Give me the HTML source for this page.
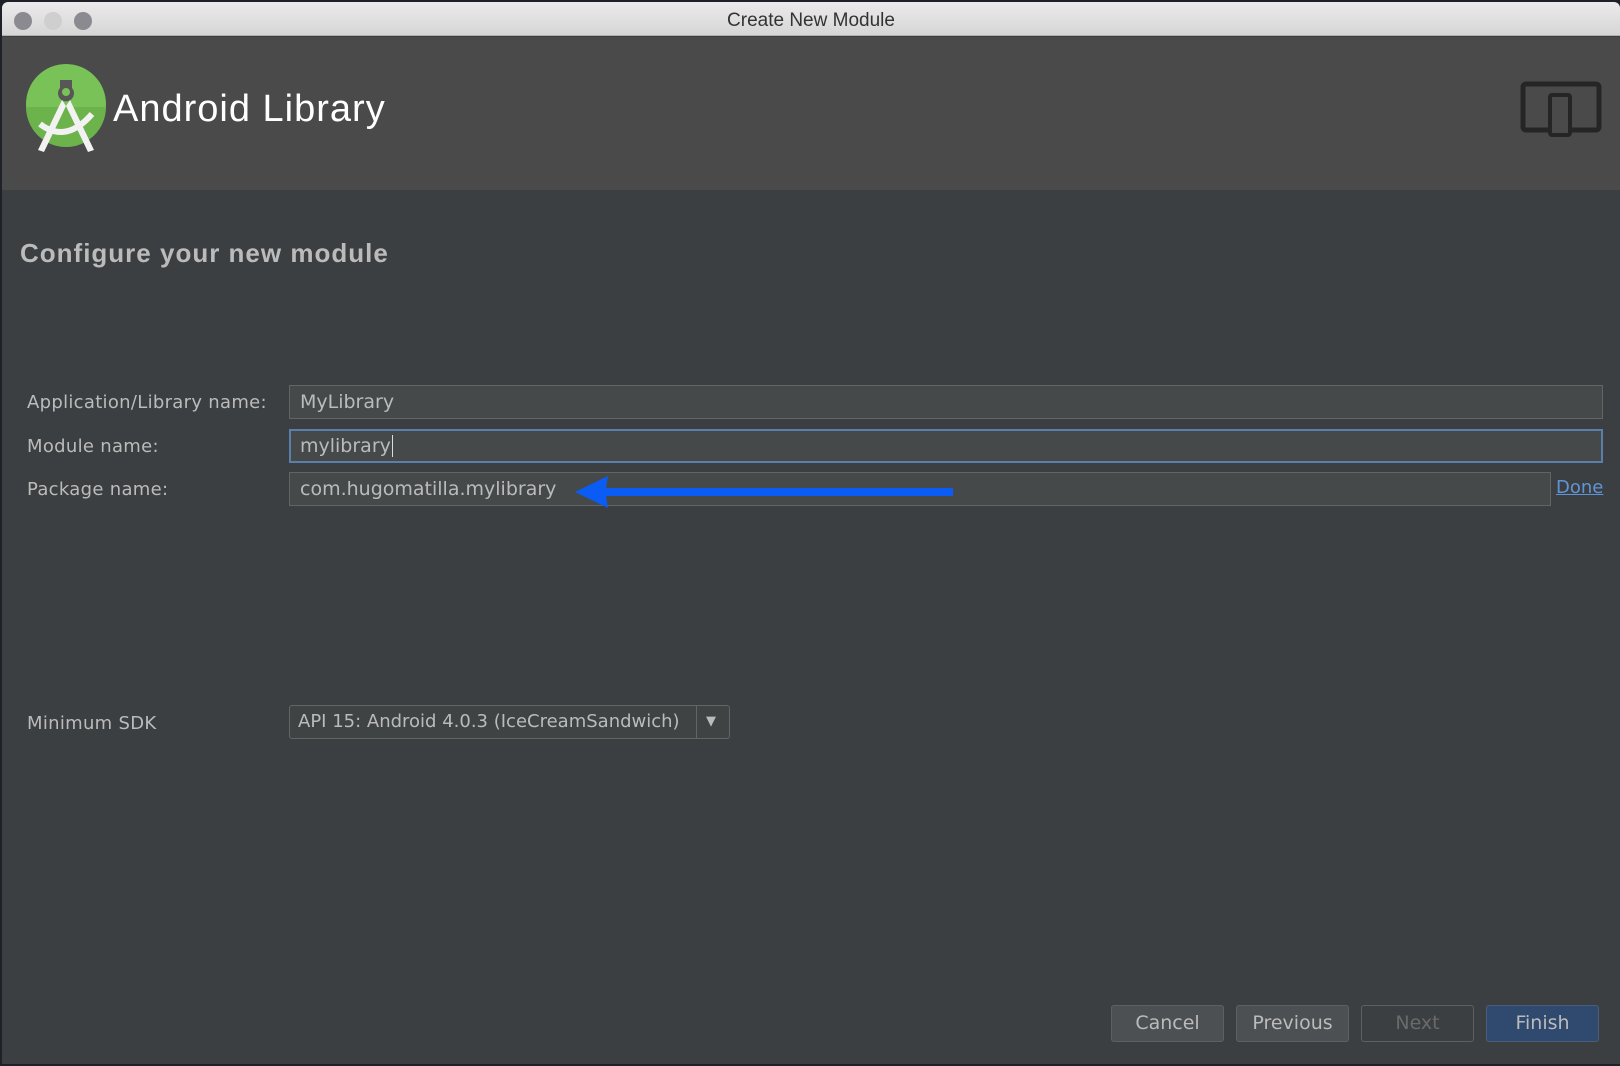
<!DOCTYPE html>
<html><head><meta charset="utf-8"><style>
*{box-sizing:border-box;margin:0;padding:0}
body{width:1620px;height:1066px;background:#1e2128;font-family:"DejaVu Sans","Liberation Sans",sans-serif;position:relative;overflow:hidden}
.win{position:absolute;left:2px;top:2px;width:1618px;height:1062px;background:#3c3f41;border-radius:6px 6px 0 0;overflow:hidden}
.tb{position:absolute;left:0;top:0;width:100%;height:34px;background:linear-gradient(#ebebeb,#d6d6d6);border-bottom:1px solid #b0b0b0;text-align:center;font-family:"Liberation Sans",sans-serif;font-size:19px;line-height:38px;color:#333}
.dot{position:absolute;top:10px;width:18px;height:18px;border-radius:50%;background:#8a8a90}
.hdr{position:absolute;left:0;top:35px;width:100%;height:153px;background:#4a4a4a}
.abs{position:absolute}
.lbl{position:absolute;left:25px;font-size:18px;color:#bbb;letter-spacing:.3px}
.fld{position:absolute;left:287px;height:34px;background:#45494a;border:1px solid #646464;color:#bbb;font-size:19px;line-height:32px;padding-left:10px}
.btn{position:absolute;top:1003px;width:113px;height:37px;border:1px solid #5e6060;border-radius:3px;background:#4c5052;color:#bbb;font-size:19px;text-align:center;line-height:35px}
</style></head><body>
<div class="win">
<div class="tb">Create New Module
<div class="dot" style="left:12px"></div><div class="dot" style="left:42px;background:#cfcfcf"></div><div class="dot" style="left:72px"></div></div>
<div class="hdr">
<svg class="abs" style="left:22px;top:25px" width="84" height="94" viewBox="0 0 84 94">
<circle cx="42" cy="42" r="40" fill="#78c257"/>
<path d="M2 45 A40 40 0 0 0 82 45Z" fill="#6db34c"/>
<path d="M36 18 h12 v8 a8 8 0 1 1 -12 0z" fill="#575757"/>
<path d="M38 38 L14 88 L20 90 L42 44Z M46 38 L70 88 L64 90 L42 44Z" fill="#f2f2f2"/>
<path d="M16 62 Q42 82 68 52" stroke="#f2f2f2" stroke-width="6" fill="none"/>
<circle cx="42" cy="30" r="4" fill="#78c257"/>
</svg>
<div class="abs" style="left:111px;top:51px;font-family:'Liberation Sans',sans-serif;font-size:38px;color:#fff;letter-spacing:1px">Android Library</div>
<svg class="abs" style="left:1518px;top:44px" width="82" height="56" viewBox="0 0 82 56">
<rect x="3" y="3" width="76" height="46" rx="3" fill="none" stroke="#252525" stroke-width="5"/>
<rect x="30" y="14" width="20" height="40" rx="2" fill="#4a4a4a" stroke="#252525" stroke-width="4"/>
</svg>
</div>
<div class="abs" style="left:18px;top:236px;font-family:'Liberation Sans',sans-serif;font-size:26px;font-weight:bold;color:#bbb;letter-spacing:1px">Configure your new module</div>
<div class="lbl" style="top:390px">Application/Library name:</div>
<div class="lbl" style="top:434px">Module name:</div>
<div class="lbl" style="top:477px">Package name:</div>
<div class="lbl" style="top:711px">Minimum SDK</div>
<div class="fld" style="top:383px;width:1314px">MyLibrary</div>
<div class="fld" style="top:427px;width:1314px;border:2px solid #5a7fab;line-height:30px;padding-left:9px">mylibrary<span style="border-left:1px solid #ddd;margin-left:1px"></span></div>
<div class="fld" style="top:470px;width:1262px">com.hugomatilla.mylibrary</div>
<svg class="abs" style="left:570px;top:472px" width="386" height="36"><path d="M3 18 L36 2 L34 14 L381 14 L381 22 L34 22 L36 34Z" fill="#0a5cf5"/></svg>
<div class="abs" style="left:1554px;top:475px;font-size:18px;color:#5f95d8;text-decoration:underline">Done</div>
<div class="fld" style="top:703px;width:441px;border-radius:3px;padding-left:8px;background:#3f4344;font-size:18px">API 15: Android 4.0.3 (IceCreamSandwich)
<div class="abs" style="left:406px;top:0;width:1px;height:100%;background:#646464"></div>
<div class="abs" style="left:416px;top:0;color:#bbb;font-size:13px">▼</div></div>
<div class="btn" style="left:1109px">Cancel</div>
<div class="btn" style="left:1234px">Previous</div>
<div class="btn" style="left:1359px;background:#3c3f41;color:#6a6a6a">Next</div>
<div class="btn" style="left:1484px;background:#2f4a6e;border-color:#4a5e7a">Finish</div>
</div>
</body></html>
